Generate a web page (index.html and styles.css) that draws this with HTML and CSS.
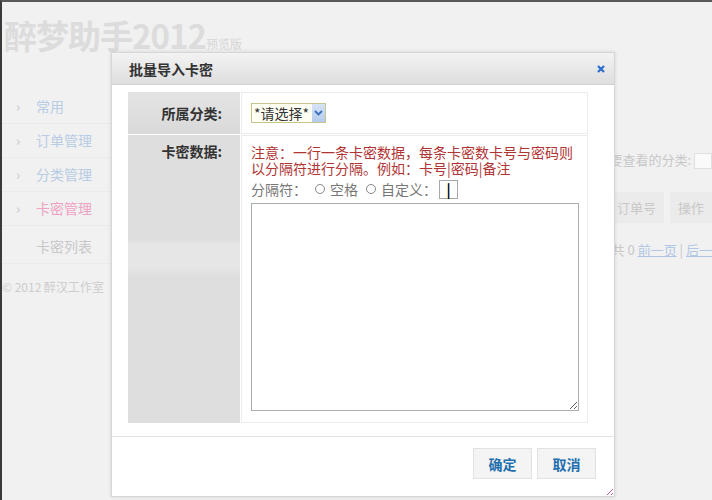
FILE: index.html
```html
<!DOCTYPE html>
<html>
<head>
  <title>批量导入卡密</title>
  <link rel="stylesheet" href="styles.css">
</head>
<body>
  <div class="page">
    <div class="top">
      <span class="logo">醉梦助手2012</span><span class="ver">预览版</span>
    </div>
    <div class="main">
      <ul class="side">
        <li><i>›</i>常用</li>
        <li><i>›</i>订单管理</li>
        <li><i>›</i>分类管理</li>
        <li class="on"><i>›</i>卡密管理</li>
        <li class="sub">卡密列表</li>
        <li class="copy">© 2012 醉汉工作室</li>
      </ul>
      <div class="content">
        <div class="filter">请选择要查看的分类: <span class="fsel"></span></div>
        <div class="thead"><span>订单号</span><span>操作</span></div>
        <div class="pager">共 0 <a href="javascript:;">前一页</a> | <a href="javascript:;">后一</a></div>
      </div>
    </div>
  </div>

  <div class="dialog">
    <div class="dhead">
      <span class="dtitle">批量导入卡密</span>
      <a class="close" href="javascript:;"><svg width="8" height="8" viewBox="0 0 8 8"><path d="M1 1l6 6M7 1l-6 6" stroke="#2a6fd0" stroke-width="2.2"/></svg></a>
    </div>
    <div class="dbody">
      <table class="form">
        <colgroup><col class="c1"><col></colgroup>
        <tr class="r1">
          <th>所属分类:</th>
          <td>
            <span class="sel"><span class="seltext">*请选择*</span><span class="arrow"><svg width="9" height="6" viewBox="0 0 9 6"><path d="M1 1l3.5 3.5L8 1" fill="none" stroke="#3a6fc4" stroke-width="1.8"/></svg></span></span>
          </td>
        </tr>
        <tr class="r2">
          <th>卡密数据:</th>
          <td>
            <p class="tip">注意：一行一条卡密数据，每条卡密数卡号与密码则以分隔符进行分隔。例如：卡号|密码|备注</p>
            <div class="sep">分隔符：<span class="radio first"></span>空格<span class="radio"></span>自定义：<span class="custom">|</span></div>
            <textarea class="data"></textarea>
          </td>
        </tr>
      </table>
    </div>
    <div class="dfoot">
      <a class="btn" href="javascript:;">确定</a>
      <a class="btn" href="javascript:;">取消</a>
    </div>
    <span class="grip"></span>
  </div>
</body>
</html>
```

FILE: styles.css
```css
html, body {
  margin: 0;
  height: 100%;
}
body {
  font-family: "Noto Sans CJK SC", "Liberation Sans", sans-serif;
  font-size: 13px;
  background: #f1f1f1;
  border-top: 2px solid #5a5a5a;
  border-left: 2px solid #3a3a3a;
  box-sizing: border-box;
  overflow: hidden;
}
.page {
  color: #d0d0d0;
}
.top {
  height: 88px;
  padding: 9px 0 0 2px;
  box-sizing: border-box;
}
.logo {
  font-size: 33px;
  font-weight: bold;
  color: #dcdcdc;
  letter-spacing: -1px;
}
.ver {
  font-size: 12px;
  color: #d6d6d6;
}
.main {
  display: flex;
}
.side {
  list-style: none;
  margin: 0;
  padding: 0;
  width: 112px;
}
.side li {
  height: 33px;
  line-height: 33px;
  padding-left: 14px;
  border-bottom: 1px solid #eaeaea;
  color: #b8cce4;
  font-size: 14px;
}
.side li i {
  font-style: normal;
  color: #c8c8c8;
  display: inline-block;
  width: 20px;
}
.side li.on {
  color: #f0a2c4;
}
.side li.sub {
  padding-left: 34px;
  color: #c8c8c8;
  height: 37px;
  line-height: 40px;
}
.side li.copy {
  padding-left: 0;
  border: 0;
  color: #cdcdcd;
  font-size: 12px;
  line-height: 26px;
  margin-top: 10px;
}
.content {
  flex: 1;
  padding-top: 60px;
  font-size: 13px;
  color: #c8c8c8;
}
.filter {
  text-align: right;
  white-space: nowrap;
}
.fsel {
  display: inline-block;
  width: 16px;
  height: 14px;
  border: 1px solid #e0e0e0;
  background: #fafafa;
  vertical-align: middle;
}
.thead {
  display: flex;
  justify-content: flex-end;
  gap: 6px;
  margin-top: 23px;
}
.thead span {
  background: #ebebeb;
  padding: 6px 8px;
}
.pager {
  text-align: right;
  margin-top: 17px;
  white-space: nowrap;
}
.pager a {
  color: #b0c6e4;
}

/* dialog */
.dialog {
  position: absolute;
  left: 111px;
  top: 52px;
  width: 504px;
  height: 445px;
  background: #fff;
  border: 1px solid #d6d6d6;
  box-shadow: 0 0 4px rgba(0,0,0,0.12);
  box-sizing: border-box;
  color: #333;
}
.dhead {
  height: 31px;
  background: linear-gradient(#f3f3f3, #dedede);
  border-bottom: 1px solid #d2d2d2;
  display: flex;
  align-items: center;
  justify-content: space-between;
  padding: 0 9px 0 17px;
}
.dtitle {
  font-size: 14px;
  font-weight: bold;
  color: #333;
}
.close {
  display: flex;
}
.dbody {
  padding: 6px 25px 0 15px;
  height: 352px;
  box-sizing: border-box;
  border-bottom: 1px solid #e2e2e2;
}
.form {
  width: 100%;
  table-layout: fixed;
  border-collapse: separate;
  border-spacing: 1px;
}
.form col.c1 {
  width: 112px;
}
.form th {
  text-align: right;
  padding: 0 18px 0 0;
  font-size: 14px;
  font-weight: bold;
  color: #333;
  background: linear-gradient(#e4e4e4, #d9d9d9);
}
.form td {
  border: 1px solid #ececec;
  padding: 0 9px;
}
.r1 th, .r1 td {
  height: 40px;
}
.r2 th {
  vertical-align: top;
  padding-top: 6px;
  background: linear-gradient(#dedede 0, #dedede 104px, #e6e6e6 110px, #e6e6e6 132px, #dedede 142px, #dedede 100%);
}
.r2 td {
  height: 288px;
  vertical-align: top;
  padding-top: 8px;
  box-sizing: border-box;
}
.sel {
  display: inline-flex;
  align-items: center;
  height: 20px;
  border: 1px solid #c4c48c;
  background: #fffff4;
  box-sizing: border-box;
  padding-left: 2px;
  font-size: 14px;
  color: #333;
}
.seltext {
  padding-right: 3px;
}
.arrow {
  display: inline-flex;
  align-items: center;
  justify-content: center;
  width: 13px;
  height: 18px;
  background: linear-gradient(#d6e3f6, #b4cbee);
}
.tip {
  margin: 0;
  color: #b03434;
  font-size: 14px;
  line-height: 16px;
}
.sep {
  color: #777;
  font-size: 14px;
  height: 22px;
  display: flex;
  align-items: center;
  margin-top: 2px;
}
.radio {
  display: inline-block;
  width: 8px;
  height: 8px;
  border: 1px solid #888;
  border-radius: 50%;
  margin: 0 5px 0 8px;
}
.radio.first {
  margin-left: 8px;
}
.custom {
  display: inline-block;
  width: 19px;
  height: 19px;
  margin-left: 2px;
  border: 1px solid #a8a8a8;
  box-sizing: border-box;
  text-align: center;
  line-height: 17px;
  color: #000;
  font-weight: bold;
}
.data {
  display: block;
  width: 328px;
  height: 208px;
  margin-top: 3px;
  border: 1px solid #a6afae;
  resize: both;
  box-sizing: border-box;
}
.dfoot {
  display: flex;
  justify-content: flex-end;
  gap: 5px;
  padding: 11px 18px 0 0;
}
.btn {
  display: inline-block;
  width: 59px;
  height: 31px;
  line-height: 31px;
  text-align: center;
  background: #f4f4f4;
  border: 1px solid #e2e2e2;
  box-sizing: border-box;
  color: #1f6fae;
  font-weight: bold;
  font-size: 14px;
  text-decoration: none;
}
.grip {
  position: absolute;
  right: 1px;
  bottom: 1px;
  width: 9px;
  height: 9px;
  background: repeating-linear-gradient(135deg, transparent 0, transparent 2px, #c060a8 2px, #c060a8 3px);
  clip-path: polygon(100% 0, 100% 100%, 0 100%);
}
```
